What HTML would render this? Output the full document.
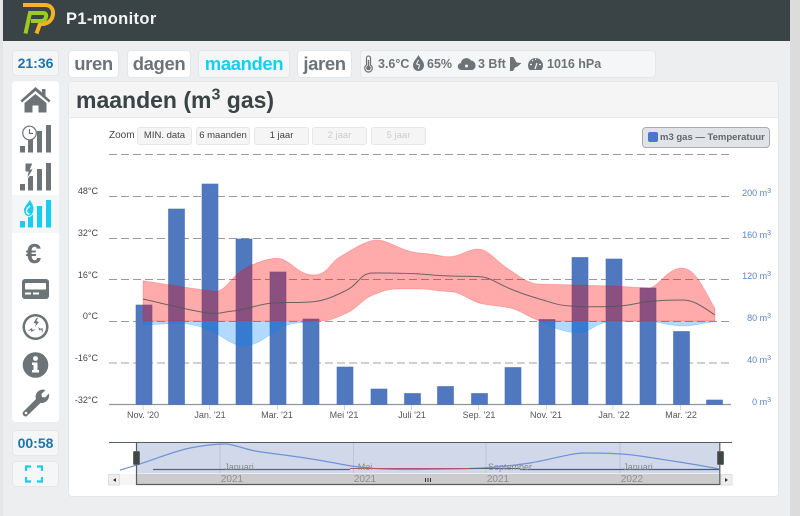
<!DOCTYPE html>
<html><head><meta charset="utf-8"><style>
html,body{margin:0;padding:0;width:800px;height:516px;overflow:hidden;background:#eceef0;font-family:"Liberation Sans",sans-serif}
.a{position:absolute;box-sizing:border-box}
.b{position:absolute;box-sizing:border-box;border-radius:4px;border:1px solid #e4e7ea;text-align:center;font-weight:bold}
.n{top:50px;height:28px;background:#fff;color:#6d7478;font-size:18.500px;letter-spacing:-.4px;line-height:25px}
.z{top:127px;height:18px;background:#f5f5f5;border:1px solid #e6e6e6;border-radius:3px;font-size:9.500px;line-height:15px;font-weight:normal;color:#444;text-align:center}
svg text{font-family:"Liberation Sans",sans-serif}
</style></head><body>
<div class="a" style="left:0;top:0;width:3px;height:516px;background:#e3e5e7"></div>
<div class="a" style="left:790px;top:0;width:10px;height:516px;background:#dcdcdc"></div>
<div class="a" style="left:3px;top:0;width:787px;height:41px;background:#3a4345"></div>
<svg class="a" style="left:20px;top:0" width="40" height="38" viewBox="20 0 40 38">
<path d="M23 5H45C51 5 53.500 9.500 53 14C52.500 20 48 24 42 24H40L36.500 33.500" fill="none" stroke="#f5b324" stroke-width="4"/>
<path d="M25.500 33.500L30 13H43C46 13 46.500 15 46 17C45.500 19.500 44 21 41 21H31" fill="none" stroke="#9ccb22" stroke-width="4"/>
</svg>
<div class="a" style="left:66px;top:8px;color:#f4f4f4;font-size:16.500px;font-weight:bold;line-height:22px;letter-spacing:.35px">P1-monitor</div>

<div class="b" style="left:12px;top:50px;width:47px;height:26px;background:#f5f6f7;color:#1b75b0;font-size:14px;line-height:25px">21:36</div>
<div class="b n" style="left:68px;width:51px">uren</div>
<div class="b n" style="left:127px;width:64px">dagen</div>
<div class="b n" style="left:198px;width:92px;background:#f5f6f7;color:#14d0ee">maanden</div>
<div class="b n" style="left:297px;width:55px">jaren</div>
<div class="b" style="left:360px;top:50px;width:296px;height:28px;background:#f5f6f7"></div>
<svg class="a" style="left:360px;top:50px" width="296" height="28" viewBox="360 50 296 28">
<g fill="#6d7478">
<path d="M366.500 58a2 2 0 0 1 4 0v7a3.800 3.800 0 1 1-4 0z" fill="none" stroke="#6d7478" stroke-width="1.200"/><circle cx="368.500" cy="68" r="2.300"/><rect x="367.800" y="60" width="1.400" height="7"/>
<path d="M418.500 55c2 4 5.500 6 5.500 10.500a5.500 5.500 0 0 1-11 0c0-4.500 3.500-6.500 5.500-10.500z"/>
<path d="M461.500 70a3.500 3.500 0 0 1-.5-7 5.500 5.500 0 0 1 10-2.500 4.800 4.800 0 0 1 4.500 4.800 4.700 4.700 0 0 1-3 4.700z"/>
<path d="M510 57h3.500l3 5.500 5 .5-4 3.500-2.500 1-2 3.500h-3z"/>
<path d="M529.500 70a7.500 7.500 0 1 1 12 0z"/>
</g>
<circle cx="466.500" cy="66" r="1.500" fill="#f5f6f7"/><path d="M535 69l2-6M530 64.500h2M539 64.500h2M532 60l1 1M535.500 58.500v1.500" stroke="#f5f6f7" stroke-width="1.200"/><path d="M418.500 60l-2 4 3 1-1 4" fill="none" stroke="#f5f6f7" stroke-width="1"/>
<g fill="#6d7478" font-size="12.500" font-weight="bold">
<text x="378" y="68">3.6°C</text><text x="427" y="68">65%</text><text x="478" y="68">3 Bft</text><text x="547" y="68">1016 hPa</text>
</g></svg>

<!-- sidebar -->
<div class="a" style="left:12px;top:81px;width:47px;height:341px;background:#fff;border-radius:4px"></div>
<div class="a" style="left:12px;top:195px;width:47px;height:38px;background:#f5f6f7"></div>
<svg class="a" style="left:12px;top:81px" width="47" height="341" viewBox="12 81 47 341">
<g fill="#6d7478">
<path d="M35.500 87L20.500 100.500l1.500 2 13.500-11.500 13.500 11.500 1.500-2-5-4.500V89h-3.500v3.500zM24.500 103L35.500 94l11 9v9.500h-8v-7h-6v7h-8z"/>
<rect x="20" y="146" width="5" height="6.500"/><rect x="28" y="138" width="5" height="14.500"/><rect x="37" y="131" width="5" height="21.500"/><rect x="46" y="125" width="5" height="27.500"/>
<rect x="20" y="184" width="5" height="6.500"/><rect x="28" y="176" width="5" height="14.500"/><rect x="37" y="169" width="5" height="21.500"/><rect x="46" y="163" width="5" height="27.500"/>
<path d="M25 163h8l-2.500 6h3l-7 11 1.500-8h-3z" stroke="#fff" stroke-width="1"/>
<text x="33.500" y="263" font-size="28" font-weight="bold" text-anchor="middle">€</text>
<rect x="22" y="279" width="27" height="20" rx="3"/>
<path fill-rule="evenodd" d="M35.500 314a13 13 0 1 0 .01 0zm0 2.500a10.500 10.500 0 1 1-.01 0z"/>
<path d="M36.500 318l-3 5 2.500.5-1 3.500 4-5-2.500-.7 1.500-3.800zM27.500 331l4.500-3 .5 2 3.500-1-4.500 3-.5-1.800zM38 327l1.500 3.500 1.500-1 2 3.500-.5-5-2 .8z"/>
<circle cx="35.500" cy="365" r="12.800"/>
<path d="M23 412l13-13c-1.500-4 1-9 7-9.500l2.500.5-4 4 .5 3 3 .5 4-4c1 5-2.500 10-8.500 9.500L27 416c-2 1.800-5.500-1.500-4-4z"/>
</g>
<circle cx="29.500" cy="133" r="6.800" fill="#fff" stroke="#6d7478" stroke-width="1.200"/><path d="M29.500 129V133.500H33" fill="none" stroke="#6d7478" stroke-width="1.200"/>
<g fill="#14d0ee"><rect x="20" y="221" width="5" height="6.500"/><rect x="28" y="213" width="5" height="14.500"/><rect x="37" y="206" width="5" height="21.500"/><rect x="46" y="200" width="5" height="27.500"/>
<path d="M30 198c.5 3.500 4 6 4 10.500 0 5-2.500 8-5.500 8s-5-3-5-6.500c0-4 5-7 6.500-12z" stroke="#f5f6f7" stroke-width="1"/></g>
<path d="M30 206c-2 1.500-3.500 3-3.500 5 0 2 1 3 3 3" fill="none" stroke="#f5f6f7" stroke-width="1.500"/>
<rect x="25" y="283" width="21" height="6.500" rx="1" fill="#fff"/><rect x="25" y="292.500" width="6" height="2" fill="#fff"/><rect x="33" y="292.500" width="6" height="2" fill="#fff"/>
<g fill="#fff"><circle cx="35.500" cy="358.500" r="2.400"/><path d="M32 362.500h5.500v7.500h1.500v2.500h-7V370h1.500v-5H32z"/></g>
<circle cx="26" cy="413" r="1.300" fill="#fff"/>
</svg>
<div class="b" style="left:12px;top:430px;width:47px;height:26px;background:#f5f6f7;color:#1b75b0;font-size:14px;line-height:25px">00:58</div>
<div class="b" style="left:12px;top:461px;width:47px;height:26px;background:#f5f6f7"></div>
<svg class="a" style="left:25px;top:465px" width="18" height="18"><path d="M1 6V1.500H6M12 1.500H17V6M17 12V16.500H12M6 16.500H1V12" fill="none" stroke="#14d0ee" stroke-width="2.200"/></svg>

<!-- main card -->
<div class="a" style="left:68px;top:81px;width:711px;height:416px;background:#fff;border:1px solid #e4e7ea;border-radius:4px"></div>
<div class="a" style="left:69px;top:82px;width:709px;height:36px;background:#f5f5f5;border-bottom:1px solid #e4e7ea;border-radius:4px 4px 0 0"></div>
<div class="a" style="left:76px;top:85px;color:#3a4345;font-size:23px;font-weight:bold;line-height:30px;white-space:nowrap">maanden (m<sup style="font-size:16px;line-height:0">3</sup> gas)</div>

<div class="a" style="left:109px;top:129px;font-size:10px;color:#444;line-height:13px">Zoom</div>
<div class="a z" style="left:137px;width:55px">MIN. data</div>
<div class="a z" style="left:196px;width:54px">6 maanden</div>
<div class="a z" style="left:254px;width:55px">1 jaar</div>
<div class="a z" style="left:312px;width:55px;color:#ccc">2 jaar</div>
<div class="a z" style="left:371px;width:55px;color:#ccc">5 jaar</div>
<div class="a" style="left:642px;top:127px;width:128px;height:21px;background:#e0e4e8;border:1px solid #a8acae;border-radius:4px"></div>
<div class="a" style="left:648px;top:132px;width:10px;height:10px;background:#4a78c8;border-radius:2px"></div>
<div class="a" style="left:660px;top:131px;font-size:9.500px;font-weight:bold;color:#666;line-height:13px;white-space:nowrap">m3 gas — Temperatuur</div>

<svg class="a" style="left:0;top:0" width="800" height="516" viewBox="0 0 800 516">
<g stroke="#9a9a9a" stroke-width="1" stroke-dasharray="8 4" fill="none">
<path d="M109 154.500H730M109 196.500H730M109 238.500H730M109 279.500H730M109 321.500H730"/>
<path d="M109 363H730" stroke="#b4b4b4" stroke-width="1.300"/>
</g>
<path d="M109 404.500H731" stroke="#8f969c" stroke-width="1.200"/>
<g fill="#4f78bf" stroke="#4a70b4" stroke-width=".6">
<rect x="136" y="305" width="16" height="99.500"/><rect x="168.500" y="209" width="16" height="195.500"/><rect x="202" y="184" width="16" height="220.500"/><rect x="236" y="239" width="16" height="165.500"/><rect x="270" y="272" width="16" height="132.500"/><rect x="303" y="319" width="16" height="85.500"/><rect x="337" y="367" width="16" height="37.500"/><rect x="371" y="389" width="16" height="15.500"/><rect x="404.500" y="393.500" width="16" height="11"/><rect x="437.500" y="386.500" width="16" height="18"/><rect x="471.500" y="393.500" width="16" height="11"/><rect x="505" y="367.500" width="16" height="37"/><rect x="539" y="319.500" width="16" height="85"/><rect x="572" y="257.500" width="16" height="147"/><rect x="606" y="259" width="16" height="145.500"/><rect x="640" y="288" width="16" height="116.500"/><rect x="673.500" y="331.500" width="16" height="73"/><rect x="706.500" y="400" width="16" height="4.500"/>
</g>
<path d="M143 321.500L143 325 183 323C195 325 202 327 210 330S232 346 243 346 262 340 270 335 280 327 287 325 305 322 317 321.500ZM540 321.500C552 327 565 332.700 577 332.700S595 325 603 323L613 321 653 321.500C662 323 672 326 683 326S705 322.500 715 321.500Z" fill="rgba(0,128,255,.3)" stroke="rgba(0,128,255,.25)" stroke-width=".7"/>
<path d="M143 280.700L183 287 216 291.500C226 290 231 278 240 271.700S265 258.500 277 258.300 298 275 313 275 330 262 340 256.700 365 240 377 240 402 252 420 253 440 257 450 256.700 468 249 478 249 495 260 507 268 528 284 540 284L613 286 650 288C660 285 668 268 682 268S705 292 715 308.300V321H540C530 318 520 310 510 308S495 306 483 304 462 292 450 291.700 430 289 420 289H400C390 289 385 290 373 295S358 308 347 313 330 321 320 321H143Z" fill="rgba(255,0,0,.33)" stroke="rgba(255,0,0,.22)" stroke-width=".8"/>
<path d="M143 299C165 304 180 308 200 311.700S220 312 233 311 258 304 273 303 300 303 313 301.700 335 296 347 290 360 273 373 273 405 273 420 274 435 275.500 450 276 475 276 483 277 498 284 513 290 530 296 543 300 558 305 570 306 605 307 620 306 635 303 647 301.700 672 300 683 300 703 307 715 315" fill="none" stroke="#555" stroke-width="1" opacity=".85"/>

<g font-size="9" fill="#444" text-anchor="end">
<text x="98" y="194">48°C</text><text x="98" y="236">32°C</text><text x="98" y="278">16°C</text><text x="98" y="319">0°C</text><text x="98" y="361">-16°C</text><text x="98" y="403">-32°C</text>
</g>
<g font-size="9" fill="#5d82c8" text-anchor="end">
<text x="771" y="196">200 m<tspan dy="-3" font-size="7">3</tspan></text>
<text x="771" y="238">160 m<tspan dy="-3" font-size="7">3</tspan></text>
<text x="771" y="279">120 m<tspan dy="-3" font-size="7">3</tspan></text>
<text x="771" y="321">80 m<tspan dy="-3" font-size="7">3</tspan></text>
<text x="771" y="363">40 m<tspan dy="-3" font-size="7">3</tspan></text>
<text x="771" y="405">0 m<tspan dy="-3" font-size="7">3</tspan></text>
</g>
<g stroke="#ccd6eb" stroke-width="1"><path d="M143 405v5M209.500 405v5M277.500 405v5M344.500 405v5M411.500 405v5M478.500 405v5M546.500 405v5M613 405v5M680.500 405v5"/></g>
<g font-size="9" fill="#555" text-anchor="middle">
<text x="143" y="418">Nov. '20</text><text x="210" y="418">Jan. '21</text><text x="277" y="418">Mar. '21</text><text x="344" y="418">Mei '21</text><text x="412" y="418">Juli '21</text><text x="479" y="418">Sep. '21</text><text x="546" y="418">Nov. '21</text><text x="614" y="418">Jan. '22</text><text x="681" y="418">Mar. '22</text>
</g>

<!-- navigator -->
<rect x="136" y="443" width="584" height="30.500" fill="#d0d8ea"/>
<rect x="120" y="474" width="600" height="11" fill="#cccccc"/>
<rect x="108" y="474" width="28" height="11" fill="#f5f5f5"/>
<path d="M220 443V473M353.500 443V473M486 443V473M620 443V473" stroke="#bcc4d6" stroke-width="1"/>
<path d="M120 470C150 462 170 452 190 448S220 444 226 444 245 449 255 451 300 456 340 464 420 469 450 469 510 466 530 463 570 453 585 453 620 453 640 456 700 465 719 469" fill="none" stroke="#6f93d3" stroke-width="1.200"/>
<path d="M153 469.500H350" stroke="#5a6478" stroke-width="1.200"/><path d="M350 468.500H470" stroke="#b0566a" stroke-width="1"/><path d="M470 468.500H520" stroke="#5a6478" stroke-width="1"/><path d="M520 469.500H719" stroke="#4a5a78" stroke-width="1.200"/>
<g font-size="9" fill="#888" text-anchor="middle"><text x="239" y="470">Januari</text><text x="365" y="470">Mei</text><text x="510" y="470">September</text><text x="638" y="470">Januari</text></g>
<g font-size="10" fill="#909090" text-anchor="middle"><text x="232" y="482">2021</text><text x="365" y="482">2021</text><text x="498" y="482">2021</text><text x="632" y="482">2022</text></g>
<path d="M109 442.500H732" stroke="#555d60" stroke-width="1" fill="none"/>
<path d="M136.500 443V484.500H719.800V443" stroke="#555d60" stroke-width="1.200" fill="none"/>
<rect x="108.500" y="474.500" width="11" height="10.500" fill="#eee" stroke="#ddd"/><path d="M116 478v4l-3-2z" fill="#333"/>
<rect x="721" y="474.500" width="11" height="10.500" fill="#eee" stroke="#ddd"/><path d="M725 478v4l3-2z" fill="#333"/>
<path d="M425.500 478v4M428 478v4M430.500 478v4" stroke="#333"/>
<rect x="133.500" y="451.500" width="6" height="13" rx="1" fill="#3f4648" stroke="#666"/>
<rect x="717.500" y="451.500" width="6" height="13" rx="1" fill="#3f4648" stroke="#666"/>
</svg>
</body></html>
